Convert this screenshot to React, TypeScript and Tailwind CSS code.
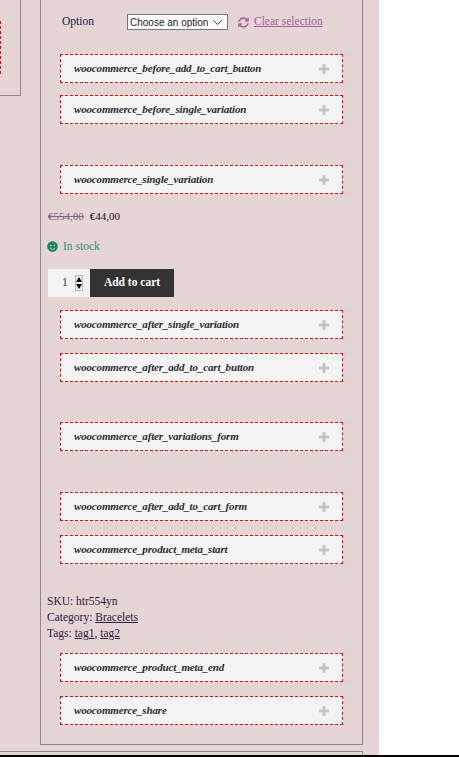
import React from "react";
import { FaSmile, FaSyncAlt } from "react-icons/fa";

function Hook({ name, className = "" }: { name: string; className?: string }) {
  return (
    <div className={`mx-[19px] flex h-[29px] items-center justify-between border border-dashed border-[#ff0000] bg-[#f4f4f4] pl-[13px] pr-[13px] ${className}`}>
      <span className="pb-[1px] text-[11px] font-bold italic tracking-[-0.16px] text-[#2b2b33]">{name}</span>
      <svg width="10" height="10" viewBox="0 0 10 10">
        <path d="M3.500 0h3v3.500H10v3H6.500V10h-3V6.500H0v-3h3.500z" fill="#c8c8c8" />
        <path d="M4.500 1h1v3.500H9v1H5.500V9h-1V5.500H1v-1h3.500z" fill="#bdbdbd" />
      </svg>
    </div>
  );
}

export default function App() {
  return (
    <div className="h-[757px] w-[459px] overflow-hidden bg-white font-['Liberation_Serif',serif] text-[11.5px] text-[#1a1a2e]">
      <div className="h-[755px] w-[379px] overflow-hidden bg-[#e5d5d5]">
        <div className="flex items-start">
          <div className="flex h-[96px] w-[21px] shrink-0 items-start border-r border-b border-[#8a8a8a] pt-[21px]">
            <div className="h-[53px] w-[1px] border-r border-dashed border-[#ff0000]" />
          </div>
          <div className="ml-[19px] h-[745px] w-[323px] shrink-0 border-x border-b border-[#8a8a8a]">
            <div className="flex h-[44px] items-center pl-[21px]">
              <span className="w-[65px] text-[#1a1a3a]">Option</span>
              <div className="flex h-[16px] w-[101px] items-center justify-between whitespace-nowrap border border-[#777] bg-white pl-[2px] pr-[5px] font-['Liberation_Sans',sans-serif] text-[10px] text-[#222]">
                <span>Choose an option</span>
                <svg width="9" height="5" viewBox="0 0 9 5" fill="none" stroke="#333"><path d="M.3.300 4.500 4.500 8.700.300" /></svg>
              </div>
              <FaSyncAlt className="ml-[10px] text-[11px] text-[#a56a9c]" />
              <span className="ml-[5px] text-[#a0609a] underline">Clear selection</span>
            </div>
            <Hook name="woocommerce_before_add_to_cart_button" className="mt-[10px]" />
            <Hook name="woocommerce_before_single_variation" className="mt-[12px]" />
            <Hook name="woocommerce_single_variation" className="mt-[41px]" />
            <div className="ml-[7px] mt-[15px] flex gap-[6px] text-[11px] leading-[14px]">
              <span className="text-[#7a6a80] line-through">€554,00</span>
              <span className="text-[#111]">€44,00</span>
            </div>
            <div className="ml-[6px] mt-[16px] flex items-center gap-[5px] leading-[14px] text-[#2f8f6f]">
              <FaSmile className="text-[11px] text-[#1f8a5a]" />
              <span>In stock</span>
            </div>
            <div className="ml-[7px] mt-[16px] flex h-[28px]">
              <div className="flex w-[42px] items-center bg-[#f3f3f3] pl-[14px] text-[#333]">
                <span className="w-[13px]">1</span>
                <div className="flex h-[16px] w-[8px] flex-col items-center justify-between border-x border-y border-[#b8b8b8] bg-[#f3f3f3] py-[1px]">
                  <div className="h-0 w-0 border-x-[3px] border-b-[5px] border-x-transparent border-b-black" />
                  <div className="h-0 w-0 border-x-[3px] border-t-[5px] border-x-transparent border-t-black" />
                </div>
              </div>
              <button className="w-[84px] bg-[#333] text-[11.5px] font-bold text-white">Add to cart</button>
            </div>
            <Hook name="woocommerce_after_single_variation" className="mt-[13px]" />
            <Hook name="woocommerce_after_add_to_cart_button" className="mt-[14px]" />
            <Hook name="woocommerce_after_variations_form" className="mt-[40px]" />
            <Hook name="woocommerce_after_add_to_cart_form" className="mt-[41px]" />
            <Hook name="woocommerce_product_meta_start" className="mt-[14px]" />
            <div className="ml-[6px] mt-[29px] leading-[16px] text-[#2a1a3a]">
              <div>SKU: htr554yn</div>
              <div>Category: <span className="underline">Bracelets</span></div>
              <div>Tags: <span className="underline">tag1</span>, <span className="underline">tag2</span></div>
            </div>
            <Hook name="woocommerce_product_meta_end" className="mt-[12px]" />
            <Hook name="woocommerce_share" className="mt-[14px]" />
          </div>
        </div>
        <div className="mt-[6px] h-[4px] w-[363px] border-t border-r border-[#8a8a8a]" />
      </div>
      <div className="h-[2px] bg-black" />
    </div>
  );
}
